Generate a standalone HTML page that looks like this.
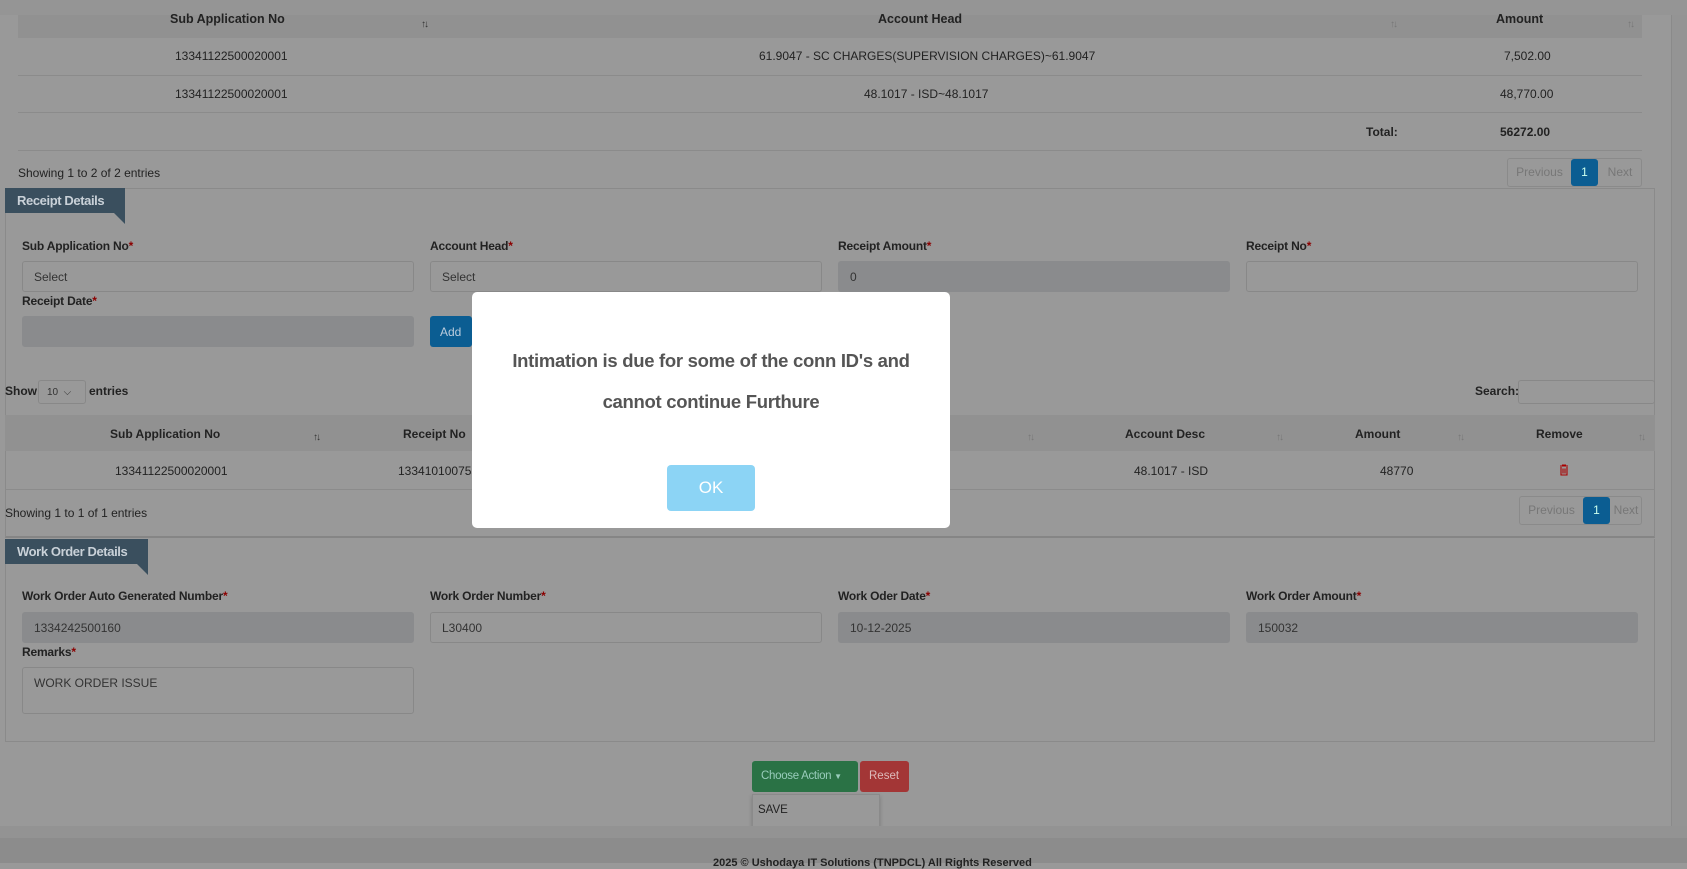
<!DOCTYPE html>
<html><head><meta charset="utf-8"><style>
*{box-sizing:border-box;margin:0;padding:0}
body{width:1687px;height:863px;overflow:hidden;background:#999;font-family:"Liberation Sans",sans-serif;font-size:12px;color:#222;position:relative}
.a{position:absolute;white-space:nowrap}
.c{text-align:center}
.b{font-weight:bold}
.hdr{background:#919191}
.line{height:1px;background:#8b8b8b}
.inp{position:absolute;height:31px;border:1px solid #888;border-radius:3px;padding:8px 11px;font-size:12px;color:#333}
.dis{background:#8a8b8d;border-color:#8a8b8d}
.lbl{position:absolute;font-weight:bold;font-size:12px;color:#222;white-space:nowrap;letter-spacing:-0.2px}
.lbl i{color:#8b0000;font-style:normal}
.sort{position:absolute;color:#777;font-size:10px;letter-spacing:-2px}
.tag{position:absolute;background:#3a4f5e;color:#c9d1d8;font-weight:bold;font-size:13px;padding:5px 12px;white-space:nowrap;letter-spacing:-0.4px;height:25px}
.tag:after{content:"";position:absolute;right:0;bottom:-11px;border-top:11px solid #3a4f5e;border-left:11px solid transparent}
.pg{position:absolute;border:1px solid #8a8a8a;border-radius:3px;height:29px;font-size:12px;color:#777;white-space:nowrap}
.pg span{position:absolute;top:0;height:27px;line-height:27px;text-align:center}
.pg .on{background:#0b5d92;color:#cfe;border-radius:3px}
</style></head><body>
<div class="a" style="left:0;top:0;width:1687px;height:15px;background:#959595"></div>
<div class="a" style="left:1671px;top:15px;width:16px;height:811px;background:#949494;border-left:1px solid #8a8a8a"></div>
<div class="a hdr" style="left:18px;top:15px;width:1624px;height:23px"></div>
<div class="a b" style="left:170px;top:12px;font-size:12.5px">Sub Application No</div>
<div class="sort" style="left:421px;top:19px;color:#333">↑↓</div>
<div class="a b" style="left:878px;top:12px;font-size:12.5px">Account Head</div>
<div class="sort" style="left:1390px;top:19px">↑↓</div>
<div class="a b" style="left:1496px;top:12px;font-size:12.5px">Amount</div>
<div class="sort" style="left:1627px;top:19px">↑↓</div>
<div class="a line" style="left:18px;top:75px;width:1624px"></div>
<div class="a line" style="left:18px;top:112px;width:1624px"></div>
<div class="a line" style="left:18px;top:150px;width:1624px"></div>
<div class="a" style="left:175px;top:49px">13341122500020001</div>
<div class="a" style="left:759px;top:49px">61.9047 - SC CHARGES(SUPERVISION CHARGES)~61.9047</div>
<div class="a" style="left:1504px;top:49px">7,502.00</div>
<div class="a" style="left:175px;top:87px">13341122500020001</div>
<div class="a" style="left:864px;top:87px">48.1017 - ISD~48.1017</div>
<div class="a" style="left:1500px;top:87px">48,770.00</div>
<div class="a b" style="left:1366px;top:125px">Total:</div>
<div class="a b" style="left:1500px;top:125px">56272.00</div>
<div class="a" style="left:18px;top:166px">Showing 1 to 2 of 2 entries</div>
<div class="pg" style="left:1507px;top:158px;width:135px"><span style="left:0;width:63px">Previous</span><span class="on" style="left:63px;width:27px">1</span><span style="left:90px;width:44px">Next</span></div>
<div class="a" style="left:5px;top:188px;width:1650px;height:350px;border:1px solid #8a8a8a;border-bottom:2px solid #858585"></div>
<div class="tag" style="left:5px;top:188px;width:120px">Receipt Details</div>
<div class="lbl" style="left:22px;top:239px">Sub Application No<i>*</i></div>
<div class="lbl" style="left:430px;top:239px">Account Head<i>*</i></div>
<div class="lbl" style="left:838px;top:239px">Receipt Amount<i>*</i></div>
<div class="lbl" style="left:1246px;top:239px">Receipt No<i>*</i></div>
<div class="inp" style="left:22px;top:261px;width:392px">Select</div>
<div class="inp" style="left:430px;top:261px;width:392px">Select</div>
<div class="inp dis" style="left:838px;top:261px;width:392px">0</div>
<div class="inp" style="left:1246px;top:261px;width:392px"></div>
<div class="lbl" style="left:22px;top:294px">Receipt Date<i>*</i></div>
<div class="inp dis" style="left:22px;top:316px;width:392px"></div>
<div class="a" style="left:430px;top:316px;width:42px;height:31px;background:#0b5d92;color:#bcd;border-radius:3px;padding:9px 10px">Add</div>
<div class="a b" style="left:5px;top:384px">Show</div>
<div class="a" style="left:38px;top:380px;width:48px;height:24px;border:1px solid #888;border-radius:3px;font-size:10px;padding:6px 8px;color:#333">10 &nbsp;⌵</div>
<div class="a b" style="left:89px;top:384px">entries</div>
<div class="a b" style="left:1475px;top:384px">Search:</div>
<div class="a" style="left:1518px;top:380px;width:137px;height:24px;border:1px solid #888;border-radius:3px"></div>
<div class="a hdr" style="left:5px;top:415px;width:1650px;height:36px"></div>
<div class="a b" style="left:110px;top:427px">Sub Application No</div>
<div class="sort" style="left:313px;top:432px;color:#333">↑↓</div>
<div class="a b" style="left:403px;top:427px">Receipt No</div>
<div class="sort" style="left:1027px;top:432px">↑↓</div>
<div class="a b" style="left:1125px;top:427px">Account Desc</div>
<div class="sort" style="left:1276px;top:432px">↑↓</div>
<div class="a b" style="left:1355px;top:427px">Amount</div>
<div class="sort" style="left:1457px;top:432px">↑↓</div>
<div class="a b" style="left:1536px;top:427px">Remove</div>
<div class="sort" style="left:1638px;top:432px">↑↓</div>
<div class="a" style="left:115px;top:464px">13341122500020001</div>
<div class="a" style="left:398px;top:464px">133410100755</div>
<div class="a" style="left:1134px;top:464px">48.1017 - ISD</div>
<div class="a" style="left:1380px;top:464px">48770</div>
<svg class="a" style="left:1559px;top:464px" width="10" height="12" viewBox="0 0 10 12"><path d="M1 2h8M3.5 2V1h3v1M2 3v8h6V3M4 4.5v5M6 4.5v5" stroke="#a00" fill="none" stroke-width="1.1"/></svg>
<div class="a line" style="left:5px;top:489px;width:1650px"></div>
<div class="a" style="left:5px;top:506px">Showing 1 to 1 of 1 entries</div>
<div class="pg" style="left:1519px;top:496px;width:123px"><span style="left:0;width:63px">Previous</span><span class="on" style="left:63px;width:27px">1</span><span style="left:90px;width:32px">Next</span></div>
<div class="a" style="left:5px;top:539px;width:1650px;height:203px;border:1px solid #8a8a8a;border-top:none"></div>
<div class="tag" style="left:5px;top:539px;width:143px">Work Order Details</div>
<div class="lbl" style="left:22px;top:589px">Work Order Auto Generated Number<i>*</i></div>
<div class="lbl" style="left:430px;top:589px">Work Order Number<i>*</i></div>
<div class="lbl" style="left:838px;top:589px">Work Oder Date<i>*</i></div>
<div class="lbl" style="left:1246px;top:589px">Work Order Amount<i>*</i></div>
<div class="inp dis" style="left:22px;top:612px;width:392px">1334242500160</div>
<div class="inp" style="left:430px;top:612px;width:392px">L30400</div>
<div class="inp dis" style="left:838px;top:612px;width:392px">10-12-2025</div>
<div class="inp dis" style="left:1246px;top:612px;width:392px">150032</div>
<div class="lbl" style="left:22px;top:645px">Remarks<i>*</i></div>
<div class="inp" style="left:22px;top:667px;width:392px;height:47px">WORK ORDER ISSUE</div>
<div class="a" style="left:752px;top:761px;width:106px;height:31px;background:#2a7245;color:#9cb;border-radius:3px;padding:9px 0 0 9px;font-size:11.5px;letter-spacing:-0.3px">Choose Action <span style="font-size:8px">▼</span></div>
<div class="a" style="left:860px;top:761px;width:49px;height:31px;background:#a33636;color:#dbb;border-radius:3px;padding:9px 9px;font-size:11.5px">Reset</div>
<div class="a" style="left:752px;top:794px;width:128px;height:33px;border:1px solid #8a8a8a;background:#999;padding:9px 5px;font-size:11.5px;box-shadow:0 2px 4px rgba(0,0,0,.2)">SAVE</div>
<div class="a" style="left:0;top:826px;width:1687px;height:12px;background:#939393"></div>
<div class="a" style="left:0;top:838px;width:1687px;height:25px;background:#8c8c8c"></div>
<div class="a b" style="left:713px;top:857px;font-size:11px">2025 © Ushodaya IT Solutions (TNPDCL) All Rights Reserved</div>
<div class="a" style="left:472px;top:292px;width:478px;height:236px;background:#fff;border-radius:5px"></div>
<div class="a c b" style="left:472px;top:340px;width:478px;font-size:18.5px;color:#555;line-height:41px;letter-spacing:-0.3px">Intimation is due for some of the conn ID's and<br>cannot continue Furthure</div>
<div class="a c" style="left:667px;top:465px;width:88px;height:46px;background:#8cd4f5;color:#fff;border-radius:4px;font-size:17px;padding-top:13px">OK</div>
</body></html>
